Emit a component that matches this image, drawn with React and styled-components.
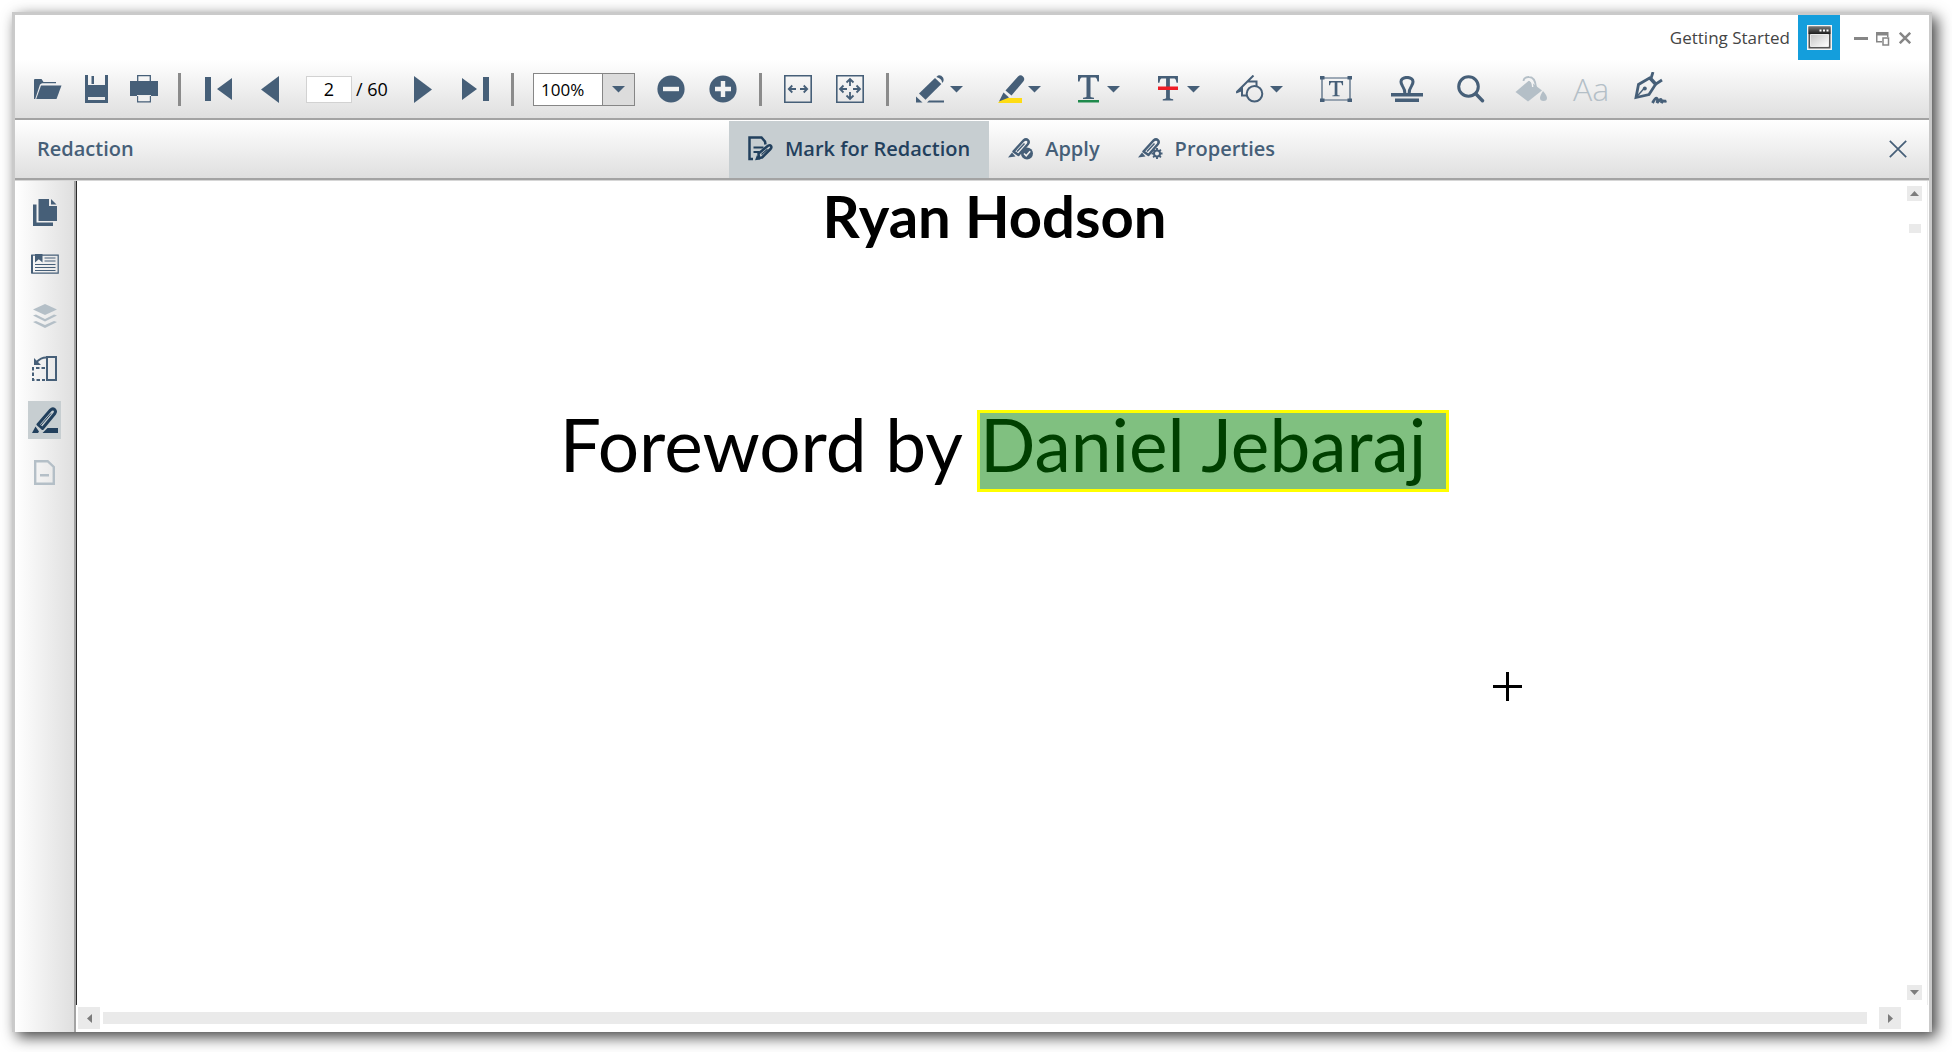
import React from "react";
import styled, { createGlobalStyle, css } from "styled-components";

const ink = "#465f78";
const navy = "#22405d";
const faded = "#b4bfc7";

const GlobalStyle = createGlobalStyle`
  *, *::before, *::after { box-sizing: border-box; }
  body {
    margin: 0;
    background: #fff;
    font-family: "Open Sans", "Noto Sans", sans-serif;
    color: #000;
  }
  button, input, select { font: inherit; color: inherit; }
  svg { display: block; flex: none; }
`;

const bar = css`
  border-bottom: 2px solid #a3a3a3;
  box-shadow: 0 1px 0 #d6d6d6;
  position: relative;
`;

const Desktop = styled.div`
  min-height: 100vh;
  padding: 12px 20px 20px 12px;
  display: flex;
`;

const Window = styled.div`
  flex: 1;
  min-width: 0;
  display: flex;
  flex-direction: column;
  background: #fff;
  border: 3px solid #cacaca;
  border-bottom: 0;
  box-shadow: 5px 5px 14px rgba(0, 0, 0, 0.75);
`;

const TitleBar = styled.header`
  display: flex;
  justify-content: flex-end;
  align-items: center;
  height: 45px;
  padding-right: 13px;
`;

const WindowTitle = styled.h1`
  margin: 0 8px 0 0;
  font-size: 17px;
  font-weight: 400;
  line-height: 24px;
  color: #444;
`;

const AppTile = styled.div`
  display: grid;
  place-items: center;
  width: 42px;
  height: 45px;
  margin-right: 10px;
  background: #149edc;
`;

const PlainButton = styled.button`
  display: flex;
  align-items: center;
  justify-content: center;
  flex: none;
  padding: 0;
  border: 0;
  background: none;
  color: ${(p) => (p.disabled ? faded : ink)};
`;

const CaptionButton = styled(PlainButton)`
  width: 22px;
  height: 30px;
  color: #868686;
`;

const Toolbar = styled.div`
  ${bar}
  display: flex;
  align-items: center;
  height: 60px;
  padding-left: 9px;
  overflow: hidden;
  background: linear-gradient(#fff, #dfdfdf);
`;

const ToolButton = styled(PlainButton)`
  width: ${(p) => p.$w || 52}px;
  height: 44px;
  gap: ${(p) => p.$gap || 0}px;
`;

const Divider = styled.span`
  flex: none;
  width: 3px;
  height: 33px;
  margin: 0 ${(p) => p.$after || 10}px 0 10px;
  background: #8b8b8b;
`;

const PageField = styled.label`
  display: flex;
  align-items: center;
  flex: none;
  gap: 4px;
  width: 91px;
  margin-left: 10px;
  font-size: 18px;
  line-height: 24px;
`;

const PageInput = styled.input`
  width: 46px;
  height: 27px;
  padding: 0;
  border: 1px solid #d2d2d2;
  background: #fff;
  text-align: center;
`;

const ZoomBox = styled.div`
  display: flex;
  flex: none;
  width: 102px;
  height: 33px;
  margin-right: 10px;
  border: 1px solid #868686;
  background: #fff;
`;

const ZoomSelect = styled.select`
  flex: 1;
  min-width: 0;
  padding: 0 0 0 7px;
  border: 0;
  appearance: none;
  background: none;
  font-size: 17px;
`;

const ZoomArrow = styled.span`
  display: grid;
  place-items: center;
  width: 32px;
  border-left: 1px solid #868686;
  background: #dcdcdc;
  color: ${ink};
`;

const FontSample = styled.span`
  font-size: 32px;
  font-weight: 300;
  line-height: 40px;
`;

const RedactionBar = styled.div`
  ${bar}
  display: flex;
  align-items: stretch;
  height: 60px;
  padding-top: 1px;
  background: linear-gradient(#fff, #dfdfdf);
  color: ${ink};
  font-size: 20px;
  font-weight: 600;
  line-height: 26px;
`;

const BarTitle = styled.h2`
  display: flex;
  align-items: center;
  width: 37.3%;
  margin: 0;
  padding: 0 0 2px 22px;
  font-size: inherit;
  font-weight: inherit;
`;

const ActionButton = styled(PlainButton)`
  gap: 12px;
  padding: 0 19px 2px;
  background: ${(p) => (p.$active ? "#c7ced1" : "none")};
  color: ${(p) => (p.$active ? navy : ink)};
`;

const CloseButton = styled(PlainButton)`
  width: 44px;
  margin-left: auto;
  margin-right: 9px;
  padding-bottom: 1px;
`;

const Workspace = styled.div`
  flex: 1;
  min-height: 0;
  display: flex;
  padding-top: 1px;
`;

const SideBar = styled.nav`
  display: flex;
  flex-direction: column;
  align-items: center;
  flex: none;
  gap: 14px;
  width: 61px;
  padding: 12px 13px 0;
  border-right: 2px solid #a3a3a3;
  background: linear-gradient(90deg, #fff, #dfdfdf);
`;

const SideButton = styled(PlainButton)`
  width: 33px;
  height: 38px;
  background: ${(p) => (p.$active ? "#c7ced1" : "none")};
  ${(p) => p.$active && `color: ${navy};`}
`;

const Viewer = styled.div`
  flex: 1;
  min-width: 0;
  display: flex;
  flex-direction: column;
`;

const ViewRow = styled.div`
  flex: 1;
  display: flex;
`;

const Page = styled.main`
  position: relative;
  flex: 1;
  display: flex;
  flex-direction: column;
  align-items: center;
  gap: 159px;
  border-left: 1px solid #2a2a2a;
  padding-left: 6px;
  font-family: Lato, "Open Sans", sans-serif;
`;

const Author = styled.p`
  margin: 0;
  font-size: 58px;
  font-weight: 700;
  line-height: 70px;
`;

const Foreword = styled.p`
  display: flex;
  align-items: baseline;
  gap: 14px;
  margin: 0;
  font-size: 73px;
  line-height: 62px;
`;

const Redacted = styled.mark`
  height: 82px;
  margin-right: -20px;
  padding-right: 20px;
  border: 3px solid #ff0;
  background: #80c080;
  color: #004000;
`;

const Crosshair = styled.svg`
  position: absolute;
  left: 77.4%;
  top: 491px;
`;

const VScroll = styled.div`
  display: flex;
  flex-direction: column;
  align-items: center;
  width: 22px;
  margin-right: 1px;
  padding: 5px 4px 5px 0;
  border-right: 1px solid #ececec;
`;

const HScroll = styled.div`
  display: flex;
  align-items: center;
  gap: 3px;
  height: 27px;
  padding: 0 28px 1px 2px;
`;

const ScrollButton = styled(PlainButton)`
  width: ${(p) => p.$size}px;
  height: ${(p) => p.$size}px;
  background: #eaeaea;
  color: #7c7c7c;
`;

const VThumb = styled.span`
  width: 12px;
  height: 9px;
  margin: 23px 0 auto;
  background: #eaeaea;
`;

const HThumb = styled.span`
  flex: 1;
  height: 12px;
  margin-right: 9px;
  background: #eaeaea;
`;

const Icon = ({ w, h, children }) => (
  <svg width={w} height={h} viewBox={`0 0 ${w} ${h}`} fill="currentColor" aria-hidden="true">
    {children}
  </svg>
);

const Caret = () => (
  <Icon w={13} h={7}><path d="M0 0h13L6.500 6.500z" /></Icon>
);

const OpenIcon = () => (
  <Icon w={28} h={21}>
    <path d="M0 20V1q0-1 1-1h6.500l2 3H22v1.200H8L6 5.500 1.200 20z" />
    <path d="M7 6.500h20.500L22.500 20H2.200z" />
  </Icon>
);
const SaveIcon = () => (
  <Icon w={23} h={28}>
    <path fillRule="evenodd" d="M0 0h3v10h17V0h3v28H0zM3 22v3h17v-3z" />
    <path d="M6.500 1H9v8H6.500z" />
  </Icon>
);
const PrintIcon = () => (
  <Icon w={28} h={28}>
    <path fill="none" stroke="currentColor" strokeWidth="1.300" d="M7.700 7V.700h12.600V7M7.700 21v5.800h12.600V21" />
    <path fillRule="evenodd" d="M0 6h28v15h-7v-1H7v1H0z" />
    <path fill="#f0f0f0" d="M8.500 21h11v5h-11z" />
  </Icon>
);
const FirstIcon = () => (
  <Icon w={27} h={24}><path d="M0 0h6v24H0zM27 1v22L12 12z" /></Icon>
);
const LastIcon = () => (
  <Icon w={27} h={24}><path d="M21 0h6v24h-6zM0 1v22l15-11z" /></Icon>
);
const PrevIcon = () => <Icon w={18} h={27}><path d="M18 0v27L0 13.500z" /></Icon>;
const NextIcon = () => <Icon w={18} h={27}><path d="M0 0v27l18-13.500z" /></Icon>;
const MinusIcon = () => (
  <Icon w={28} h={28}>
    <circle cx="14" cy="14" r="13.600" />
    <path fill="#f2f2f2" d="M6 11.800h16v4.400H6z" />
  </Icon>
);
const PlusIcon = () => (
  <Icon w={28} h={28}>
    <circle cx="14" cy="14" r="13.600" />
    <path fill="#f2f2f2" d="M6 11.800h5.800V6h4.400v5.800H22v4.400h-5.800V22h-4.400v-5.800H6z" />
  </Icon>
);
const FitWidthIcon = () => (
  <Icon w={28} h={28}>
    <g fill="none" stroke="currentColor">
      <path strokeWidth="1.600" d="M.8.800h26.400v26.400H.800z" />
      <path strokeWidth="1.800" d="M4.500 14H12M8.300 10.500 4.800 14l3.500 3.500M16 14h7.500M19.700 10.500l3.500 3.500-3.500 3.500" />
    </g>
  </Icon>
);
const FitPageIcon = () => (
  <Icon w={28} h={28}>
    <g fill="none" stroke="currentColor">
      <path strokeWidth="1.600" d="M.8.800h26.400v26.400H.800z" />
      <path strokeWidth="1.800" d="M4 14h7M7.500 10.500 4 14l3.500 3.500M17 14h7M20.500 10.500 24 14l-3.500 3.500M14 4v7M10.500 7.500 14 4l3.500 3.500M14 17v7M10.500 20.500 14 24l3.500-3.500" />
    </g>
  </Icon>
);
const PencilIcon = () => (
  <Icon w={28} h={28}>
    <path d="M3 18.500 19 3l6.300 6L9.500 24.700z" />
    <path d="M20.300 2 22 .500q3-.800 5 2 1.200 2.200.2 4.300L26 8q.4-4-5.700-6z" />
    <path d="M0 21.500 6.500 27.500H0z" />
    <path d="M13 25.500h15v2H11z" />
  </Icon>
);
const HighlightIcon = () => (
  <Icon w={27} h={28}>
    <path fill="#fedc14" d="M4 23h20v5H0z" />
    <path d="M7.500 15.500 20 1.500q2.600-2.600 5 0 2.400 2.400.3 5L13.500 20.500z" />
    <path d="M5.500 17.500 11 22.500 1 26.500z" />
    <path stroke="#f4f4f4" strokeWidth="1.200" d="m6 16 7 6" />
  </Icon>
);
const serifMark = "M0 0h21v6.500h-1.500Q19 3 17.500 2.500H12.500V21.500q0 1 3.500 1.200V24H5v-1.300q3.500-.200 3.500-1.200V2.500H3.500Q2 3 1.500 6.500H0z";
const UnderlineIcon = () => (
  <Icon w={21} h={28}>
    <path d={serifMark} />
    <path fill="#1f8a4c" d="M0 25h21v2.500H0z" />
  </Icon>
);
const StrikeIcon = () => (
  <Icon w={20} h={26}>
    <path transform="scale(.95 1.020)" d={serifMark} />
    <path fill="#ee1c25" d="M0 10.500h20V14H0z" />
  </Icon>
);
const ShapesIcon = () => (
  <Icon w={28} h={28}>
    <g fill="none" stroke="currentColor" strokeWidth="2">
      <circle cx="18.500" cy="18.700" r="7.800" />
      <path d="M17.500.500.800 17M6 12.500V20.500h5M12 6.500h8.500V11M0 17.500l6-2.500" />
    </g>
  </Icon>
);
const TextBoxIcon = () => (
  <Icon w={32} h={26}>
    <path fill="none" stroke="currentColor" strokeWidth="1.200" d="M2 2h28v22H2z" />
    <path d="M0 0h4.500v3.500H0zM27.500 0H32v3.500h-4.500zM0 22.500h4.500V26H0zM27.500 22.500H32V26h-4.500z" />
    <path transform="translate(9 5) scale(.67 .64)" d={serifMark} />
  </Icon>
);
const StampIcon = () => (
  <Icon w={32} h={26}>
    <path fill="none" stroke="currentColor" strokeWidth="3" d="M14 18.500q0-5-2.500-8.500Q8.500 5 11.500 2.800 16 0 20.500 2.800q3 2.200 0 7.200-2.500 3.500-2.500 8.500" />
    <path d="M0 17h32v3.500H0zM4 22.500h24V26H4z" />
  </Icon>
);
const SearchIcon = () => (
  <Icon w={28} h={28}>
    <circle cx="11.500" cy="11.500" r="9.800" fill="none" stroke="currentColor" strokeWidth="3" />
    <path fill="none" stroke="currentColor" strokeWidth="3.400" strokeLinecap="round" d="m19 19 6.500 6.700" />
  </Icon>
);
const BucketIcon = () => (
  <Icon w={32} h={26}>
    <path d="M.5 16 14 4.500 27 14.500 13 25.500z" />
    <path fill="none" stroke="currentColor" strokeWidth="1.800" d="M8.500 5Q9 .800 14 1q6 0 7 10" />
    <path fill="none" stroke="#f4f4f4" strokeWidth="1.400" d="M10.500 6q1-2.800 4-2 3 1 3.200 7" />
    <path d="M28 15q4 4.500 4 7 0 3-3.500 3T25 22q0-2.500 3-7z" />
  </Icon>
);
const SignIcon = () => (
  <Icon w={34} h={34}>
    <g fill="none" stroke="currentColor" strokeWidth="2.800">
      <path strokeWidth="2.800" d="M2 25.500 4.500 12.500 15.500 6l6 6.500-6.500 10z" />
      <path d="M19 0 17 6.500l5 5.500L28 8" />
      <path strokeWidth="1.400" d="m2 25.500 8-9" />
      <path strokeWidth="2.800" d="M18.500 31q3-6 4.500-4.500 1 1 0 4.500 3-4 4-3.500t.5 3.500q1.500-2.500 2.500-2t2.500 0" />
    </g>
    <circle cx="10.800" cy="16.500" r="2" />
  </Icon>
);
const MarkIcon = () => (
  <Icon w={25} h={25}>
    <g fill="none" stroke="currentColor">
      <path strokeWidth="2.500" d="M17.500 8.500 17 5.500 13.500 1.500H1.500v21.500H5" />
      <path strokeWidth="2" d="M5.500 11.500h10M5.500 16h6" />
      <path strokeWidth="2.500" strokeLinejoin="round" d="m10.500 17.500 9.500-7.700q2-1.300 3 .2 1 1.500-.5 3L14 21.500l-3 .500z" />
      <path strokeWidth="1.200" d="m13.500 18.500 6-5.200" />
    </g>
    <path d="M9 19l3.500 4.500-5.500.8z" />
  </Icon>
);
const MarkerBody = () => (
  <>
    <path fill="none" stroke="currentColor" strokeWidth="2.500" strokeLinejoin="round" d="M5.500 13.500 15.500 2.500q2.500-2 4.300-.300 1.800 1.800 0 4L10.500 17z" />
    <path fill="none" stroke="currentColor" strokeWidth="1.500" d="M9 13.500 16.500 5.500" />
    <path d="M4 14.500 7.500 18.500 0 19.500z" />
  </>
);
const ApplyIcon = () => (
  <Icon w={25} h={22}>
    <MarkerBody />
    <circle cx="19" cy="15.500" r="6" />
    <path fill="none" stroke="#f0f0f0" strokeWidth="1.600" d="m16 15.500 2.200 2.300 4-4.500" />
  </Icon>
);
const PropertiesIcon = () => (
  <Icon w={25} h={22}>
    <MarkerBody />
    <g fill="none" stroke="currentColor">
      <circle cx="19" cy="15.500" r="3" strokeWidth="2" />
      <path strokeWidth="1.900" d="M19 10v2.500M19 18.500V21M13.500 15.500H16M22 15.500h2.500M15.100 11.600l1.800 1.800M21.100 17.600l1.800 1.800M15.100 19.400l1.800-1.800M21.100 13.400l1.800-1.800" />
    </g>
  </Icon>
);
const PagesIcon = () => (
  <Icon w={24} h={27}>
    <path d="M0 5.500h3.500V23.500H20V27H0z" />
    <path d="M5.500 0H16v7h8v15H5.500z" />
    <path d="M18 0l5.500 5.500H18z" />
  </Icon>
);
const BookmarkIcon = () => (
  <Icon w={28} h={20}>
    <path fill="none" stroke="currentColor" strokeWidth="1.200" d="M.8 1.200h26.400v18H.800z" />
    <path d="M4 0h7.500v8.500L7.800 5.300 4 8.500zM0 1h2v18H0z" />
    <path fill="none" stroke="currentColor" strokeWidth="1.200" d="M13.500 4h11M13.500 7h11M4 10.500h20.500M4 13.500h20.500M4 16.500h20.500" />
  </Icon>
);
const LayersIcon = () => (
  <Icon w={24} h={24}>
    <path d="M12 0 24 5.500 12 11 0 5.500z" />
    <path d="M0 11.500 3 10.500l9 4.500 9-4.500 3 1L12 17.500zM0 18l3-1 9 4 9-4 3 1-12 6z" />
  </Icon>
);
const OrganizeIcon = () => (
  <Icon w={25} h={25}>
    <path fill="none" stroke="currentColor" strokeWidth="2" d="M15 1h9v23h-9z" />
    <path fill="none" stroke="currentColor" strokeWidth="2" strokeDasharray="3.500 2" d="M13 12H1v12h12" />
    <path fill="none" stroke="currentColor" strokeWidth="1.800" d="M14 1.500Q9 1.500 4.500 6" />
    <path d="M2 2v7h7z" />
  </Icon>
);
const RedactIcon = () => (
  <Icon w={26} h={26}>
    <path fill="none" stroke="currentColor" strokeWidth="3" strokeLinejoin="round" d="M6 17.500 18.500 3q2-2 4-.500 1.800 1.800.3 4L10.500 21.500z" />
    <path fill="none" stroke="currentColor" strokeWidth="1" d="m9 18 10-11.500" />
    <path d="M3.500 19.500 7 24.500 6 26H0zM15.500 21H26v5H10.500z" />
  </Icon>
);
const DocIcon = () => (
  <Icon w={21} h={25}>
    <path fill="none" stroke="currentColor" strokeWidth="2.400" d="M1.200 1.200h12.500L19.800 7v16.800H1.200z" />
    <path d="M6 14h9v2.500H6z" />
  </Icon>
);
const CloseIcon = () => (
  <Icon w={18} h={18}>
    <path fill="none" stroke="currentColor" strokeWidth="1.700" d="m.8.800 16.400 16.400M17.200.800.800 17.200" />
  </Icon>
);
const AppIcon = () => (
  <Icon w={25} h={25}>
    <defs>
      <linearGradient id="glass" x1="0" y1="0" x2="1" y2="1">
        <stop offset="0" stopColor="#c4c4c4" />
        <stop offset="1" stopColor="#fff" />
      </linearGradient>
      <linearGradient id="strip" x1="0" y1="0" x2="0" y2="1">
        <stop offset="0" stopColor="#777" />
        <stop offset="1" stopColor="#1d1d1d" />
      </linearGradient>
    </defs>
    <path fill="#f4f4f4" d="M0 0h25v25H0z" />
    <path fill="#555" d="M1.500 1.500h22v22h-22z" />
    <path fill="url(#strip)" d="M1.500 1.500h22V9h-22z" />
    <path fill="#fff" d="M12.500 4.500h2v2h-2zM16 4.500h2v2h-2zM19.500 4.500h2v2h-2z" />
    <path fill="url(#glass)" stroke="#fff" strokeWidth=".800" d="M3.500 9.500h18v12h-18z" />
  </Icon>
);
const MinimizeIcon = () => <Icon w={14} h={12}><path d="M0 5h14v3H0z" /></Icon>;
const RestoreIcon = () => (
  <Icon w={14} h={16}>
    <path d="M0 2h12.500v5H11V5.500H1.500V11H6v1.500H0z" />
    <path fill="none" stroke="currentColor" strokeWidth="1.500" d="M7 8h5.500v7H7z" />
  </Icon>
);
const QuitIcon = () => (
  <Icon w={12} h={12}>
    <path fill="none" stroke="currentColor" strokeWidth="2.500" d="m.8.800 10.400 10.400M11.200.800.800 11.200" />
  </Icon>
);

const dropTools = [
  ["Ink", PencilIcon, 6],
  ["Highlight", HighlightIcon, 3],
  ["Underline", UnderlineIcon, 8],
  ["Strikethrough", StrikeIcon, 9],
  ["Shapes", ShapesIcon, 6],
];

const sideTools = [
  ["Thumbnails", PagesIcon],
  ["Bookmarks", BookmarkIcon],
  ["Layers", LayersIcon, { disabled: true }],
  ["Organize pages", OrganizeIcon],
  ["Redaction", RedactIcon, { $active: true }],
  ["Form", DocIcon, { disabled: true }],
];

const Tool = ({ label, w, disabled, icon: Glyph }) => (
  <ToolButton type="button" aria-label={label} $w={w} disabled={disabled}>
    <Glyph />
  </ToolButton>
);

export default function App() {
  return (
    <>
      <GlobalStyle />
      <Desktop>
        <Window>
          <TitleBar>
            <WindowTitle>Getting Started</WindowTitle>
            <AppTile><AppIcon /></AppTile>
            <CaptionButton type="button" aria-label="Minimize"><MinimizeIcon /></CaptionButton>
            <CaptionButton type="button" aria-label="Restore"><RestoreIcon /></CaptionButton>
            <CaptionButton type="button" aria-label="Close window"><QuitIcon /></CaptionButton>
          </TitleBar>

          <Toolbar role="toolbar" aria-label="Document tools">
            <Tool label="Open" w={48} icon={OpenIcon} />
            <Tool label="Save" w={48} icon={SaveIcon} />
            <Tool label="Print" w={48} icon={PrintIcon} />
            <Divider $after={11} />
            <Tool label="First page" icon={FirstIcon} />
            <Tool label="Previous page" icon={PrevIcon} />
            <PageField>
              <PageInput defaultValue="2" aria-label="Page number" />
              / 60
            </PageField>
            <Tool label="Next page" icon={NextIcon} />
            <Tool label="Last page" icon={LastIcon} />
            <Divider $after={19} />
            <ZoomBox>
              <ZoomSelect aria-label="Zoom" defaultValue="100%">
                <option>50%</option>
                <option>100%</option>
                <option>200%</option>
              </ZoomSelect>
              <ZoomArrow><Caret /></ZoomArrow>
            </ZoomBox>
            <Tool label="Zoom out" icon={MinusIcon} />
            <Tool label="Zoom in" icon={PlusIcon} />
            <Divider />
            <Tool label="Fit width" icon={FitWidthIcon} />
            <Tool label="Fit page" icon={FitPageIcon} />
            <Divider />
            {dropTools.map(([label, Glyph, gap]) => (
              <ToolButton key={label} type="button" aria-label={label} $w={80} $gap={gap}>
                <Glyph />
                <Caret />
              </ToolButton>
            ))}
            <Tool label="Text box" w={74} icon={TextBoxIcon} />
            <Tool label="Stamp" w={68} icon={StampIcon} />
            <Tool label="Search" w={60} icon={SearchIcon} />
            <Tool label="Fill colour" w={60} icon={BucketIcon} disabled />
            <ToolButton type="button" aria-label="Font" $w={60} disabled>
              <FontSample>Aa</FontSample>
            </ToolButton>
            <Tool label="Signature" w={60} icon={SignIcon} />
          </Toolbar>

          <RedactionBar>
            <BarTitle>Redaction</BarTitle>
            <ActionButton type="button" $active><MarkIcon />Mark for Redaction</ActionButton>
            <ActionButton type="button"><ApplyIcon />Apply</ActionButton>
            <ActionButton type="button"><PropertiesIcon />Properties</ActionButton>
            <CloseButton type="button" aria-label="Close redaction bar"><CloseIcon /></CloseButton>
          </RedactionBar>

          <Workspace>
            <SideBar aria-label="Panels">
              {sideTools.map(([label, Glyph, state]) => (
                <SideButton key={label} type="button" aria-label={label} {...state}>
                  <Glyph />
                </SideButton>
              ))}
            </SideBar>
            <Viewer>
              <ViewRow>
                <Page>
                  <Author>Ryan Hodson</Author>
                  <Foreword>
                    <span>Foreword by</span>
                    <Redacted>Daniel Jebaraj</Redacted>
                  </Foreword>
                  <Crosshair width="29" height="29" viewBox="0 0 29 29" aria-hidden="true">
                    <path d="M13 0h3v13h13v3H16v13h-3V16H0v-3h13z" />
                  </Crosshair>
                </Page>
                <VScroll>
                  <ScrollButton type="button" aria-label="Scroll up" $size={15}>
                    <Icon w={9} h={5}><path d="M4.500 0 9 5H0z" /></Icon>
                  </ScrollButton>
                  <VThumb />
                  <ScrollButton type="button" aria-label="Scroll down" $size={15}>
                    <Icon w={9} h={5}><path d="M0 0h9L4.500 5z" /></Icon>
                  </ScrollButton>
                </VScroll>
              </ViewRow>
              <HScroll>
                <ScrollButton type="button" aria-label="Scroll left" $size={22}>
                  <Icon w={5} h={9}><path d="M5 0v9L0 4.500z" /></Icon>
                </ScrollButton>
                <HThumb />
                <ScrollButton type="button" aria-label="Scroll right" $size={22}>
                  <Icon w={5} h={9}><path d="M0 0v9l5-4.500z" /></Icon>
                </ScrollButton>
              </HScroll>
            </Viewer>
          </Workspace>
        </Window>
      </Desktop>
    </>
  );
}
